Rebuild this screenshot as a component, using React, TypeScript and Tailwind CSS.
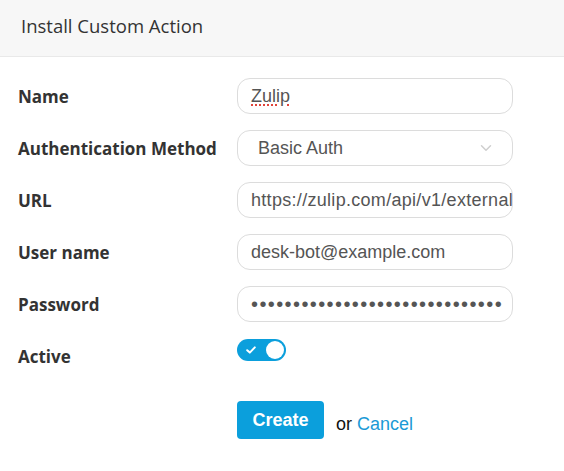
import { ChevronDown } from 'lucide-react';

const labelFont = { fontFamily: '"Open Sans", sans-serif' };
const inputFont = { fontFamily: '"Liberation Sans", Arial, sans-serif' };

function Row({ label, children }: { label: string; children: React.ReactNode }) {
  return (
    <div className="flex items-center h-9">
      <label className="w-[219px] shrink-0 text-[17px] font-bold text-[#333] pt-px" style={labelFont}>
        {label}
      </label>
      {children}
    </div>
  );
}

function Field({ children, className = '' }: { children: React.ReactNode; className?: string }) {
  return (
    <div
      className={`w-[276px] h-9 rounded-[13px] border border-[#dcdcdc] bg-white flex items-center pl-[13px] overflow-hidden whitespace-nowrap text-[18px] text-[#555] ${className}`}
      style={inputFont}
    >
      {children}
    </div>
  );
}

export default function App() {
  return (
    <div className="w-[564px] h-[471px] bg-white">
      {/* Header */}
      <div className="h-[57px] bg-[#f7f7f7] border-b border-[#e9e9e9] flex items-center px-[21px]">
        <h1 className="text-[18.5px] text-[#333] pb-[4px]" style={labelFont}>
          Install Custom Action
        </h1>
      </div>

      {/* Form */}
      <div className="pl-[18px] pt-[21px] flex flex-col gap-4">
        <Row label="Name">
          <Field>
            <span className="underline decoration-dotted decoration-[#e0443a] decoration-2 underline-offset-[3px]">
              Zulip
            </span>
          </Field>
        </Row>
        <Row label="Authentication Method">
          <Field className="pl-[20px] pr-[17px] justify-between">
            <span>Basic Auth</span>
            <ChevronDown className="w-[18px] h-[18px] text-[#cfcfcf]" strokeWidth={2} />
          </Field>
        </Row>
        <Row label="URL">
          <Field className="tracking-[0.3px]">https://zulip.com/api/v1/external/desk</Field>
        </Row>
        <Row label="User name">
          <Field>desk-bot@example.com</Field>
        </Row>
        <Row label="Password">
          <Field className="text-[20px] tracking-[1.4px] text-[#4a4a55]">
            {'•'.repeat(30)}
          </Field>
        </Row>
        <div className="flex items-start h-9">
          <label
            className="w-[219px] shrink-0 text-[17px] font-bold text-[#333] leading-9 pt-px"
            style={labelFont}
          >
            Active
          </label>
          <button className="mt-px w-[49px] h-[22px] rounded-full bg-[#0b9fdc] flex items-center justify-between pl-[9px] pr-[2px]">
            <svg width="10" height="8" viewBox="0 0 10 8">
              <path d="M1.2 4.2 L3.8 6.6 L8.8 1.4" stroke="white" strokeWidth="2" fill="none" strokeLinecap="round" strokeLinejoin="round" />
            </svg>
            <span className="w-[18px] h-[18px] rounded-full bg-white" />
          </button>
        </div>

        <div className="flex items-center mt-[11px] pl-[219px]">
          <button
            className="w-[87px] h-[38px] rounded-[4px] bg-[#0b9fdc] text-white text-[18px] font-bold"
            style={inputFont}
          >
            Create
          </button>
          <span className="ml-[12px] mt-[8px] text-[18px] text-[#111]" style={inputFont}>
            or <a className="text-[#1a9ad6]">Cancel</a>
          </span>
        </div>
      </div>
    </div>
  );
}
